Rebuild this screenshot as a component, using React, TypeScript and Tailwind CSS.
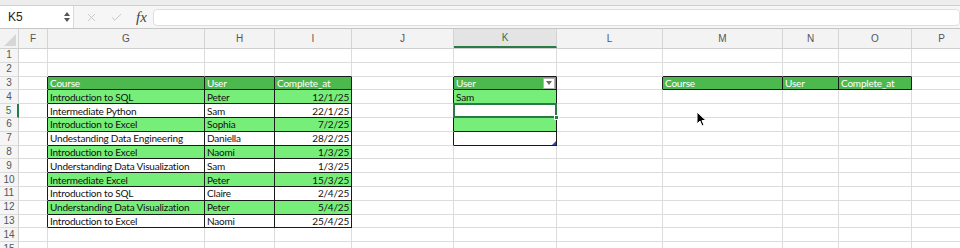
import { Check, X } from 'lucide-react';

const COLS = [
  { key: 'F', w: 'w-[29px]' },
  { key: 'G', w: 'w-[157px]' },
  { key: 'H', w: 'w-[70px]' },
  { key: 'I', w: 'w-[77px]' },
  { key: 'J', w: 'w-[102px]' },
  { key: 'K', w: 'w-[103px]' },
  { key: 'L', w: 'w-[106px]' },
  { key: 'M', w: 'w-[120px]' },
  { key: 'N', w: 'w-[56px]' },
  { key: 'O', w: 'w-[73px]' },
  { key: 'P', w: 'w-[60px]' },
];

const DATA: [string, string, string][] = [
  ['Introduction to SQL', 'Peter', '12/1/25'],
  ['Intermediate Python', 'Sam', '22/1/25'],
  ['Introduction to Excel', 'Sophia', '7/2/25'],
  ['Undestanding Data Engineering', 'Daniella', '28/2/25'],
  ['Introduction to Excel', 'Naomi', '1/3/25'],
  ['Understanding Data Visualization', 'Sam', '1/3/25'],
  ['Intermediate Excel', 'Peter', '15/3/25'],
  ['Introduction to SQL', 'Claire', '2/4/25'],
  ['Understanding Data Visualization', 'Peter', '5/4/25'],
  ['Introduction to Excel', 'Naomi', '25/4/25'],
];

const ROWS = Array.from({ length: 15 }, (_, i) => i + 1);

function bordered(ci: number, r: number): boolean {
  const k = COLS[ci]?.key;
  if (!k) return false;
  if (['G', 'H', 'I'].includes(k) && r >= 3 && r <= 13) return true;
  if (k === 'K' && r >= 3 && r <= 7) return true;
  if (['M', 'N', 'O'].includes(k) && r === 3) return true;
  return false;
}

function fill(k: string, r: number): string {
  if (r === 3 && ['G', 'H', 'I', 'K', 'M', 'N', 'O'].includes(k)) return 'bg-[#4cb94f] text-white';
  if (['G', 'H', 'I'].includes(k) && r >= 4 && r <= 13 && r % 2 === 0) return 'bg-[#77ee79]';
  if (k === 'K' && (r === 4 || r === 6)) return 'bg-[#77ee79]';
  return 'bg-white';
}

function text(k: string, r: number): string {
  if (r === 3) {
    if (k === 'G' || k === 'M') return 'Course';
    if (k === 'H' || k === 'K' || k === 'N') return 'User';
    if (k === 'I' || k === 'O') return 'Complete_at';
  }
  if (r >= 4 && r <= 13) {
    const row = DATA[r - 4];
    if (k === 'G') return row[0];
    if (k === 'H') return row[1];
    if (k === 'I') return row[2];
  }
  if (k === 'K' && r === 4) return 'Sam';
  return '';
}

function Cell({ ci, r }: { ci: number; r: number }) {
  const col = COLS[ci];
  const k = col.key;
  const right = bordered(ci, r) || bordered(ci + 1, r) ? 'border-r-[#1a1a1a]' : 'border-r-[#dcdcdc]';
  const bottom = bordered(ci, r) || bordered(ci, r + 1) ? 'border-b-[#1a1a1a]' : 'border-b-[#dcdcdc]';
  const align = k === 'I' && r > 3 ? 'justify-end pr-[2px]' : 'pl-[2px]';
  return (
    <div
      className={`relative flex h-[13.8px] shrink-0 items-center border-r border-b ${col.w} ${right} ${bottom} ${fill(k, r)} ${align} overflow-visible whitespace-nowrap text-[10px] tracking-[-0.2px] leading-none`}
    >
      {text(k, r)}
      {k === 'K' && r === 3 && (
        <div className="absolute right-[1px] top-[1px] flex h-[11px] w-[12px] items-center justify-center border border-[#b5b5b5] bg-white">
          <div className="h-0 w-0 border-x-[3.5px] border-t-[4px] border-x-transparent border-t-[#6a6a6a]" />
        </div>
      )}
      {k === 'K' && r === 5 && (
        <div className="absolute -left-px -top-px z-10 h-[15px] w-[104px] border-2 border-[#2a7a47]">
          <div className="absolute -bottom-[4px] -right-[4px] h-[5px] w-[5px] border border-white bg-[#2a7a47]" />
        </div>
      )}
      {k === 'K' && r === 7 && (
        <div className="absolute bottom-0 right-0 h-0 w-0 border-l-[4px] border-b-[4px] border-l-transparent border-b-[#2c4bb8]" />
      )}
    </div>
  );
}

export default function App() {
  return (
    <div className="relative h-[248px] w-[960px] overflow-hidden bg-white font-['Lato',sans-serif] text-[#111]">
      {/* toolbar strip */}
      <div className="h-[6px] border-b border-[#d0d0d0] bg-[#ededed]" />
      <div className="flex h-[23px] border-b border-[#c6c6c6] bg-[#f6f6f6]">
        <div className="flex w-[74px] shrink-0 items-center justify-between border-r border-[#dadada] bg-white pl-[8px] pr-[3px]">
          <span className="font-['Liberation_Sans',sans-serif] text-[12px] text-[#222]">K5</span>
          <div className="flex flex-col gap-[2px]">
            <div className="h-0 w-0 border-x-[3px] border-b-[4px] border-x-transparent border-b-[#555]" />
            <div className="h-0 w-0 border-x-[3px] border-t-[4px] border-x-transparent border-t-[#555]" />
          </div>
        </div>
        <div className="flex items-center">
          <X size={13} strokeWidth={1.6} className="ml-[11px] text-[#c2c2c2]" />
          <Check size={13} strokeWidth={1.6} className="ml-[12px] text-[#c2c2c2]" />
          <span className="ml-[13px] font-['Liberation_Serif',serif] text-[15px] italic leading-none text-[#444]">fx</span>
        </div>
        <div className="ml-[6px] mt-[3px] h-[17px] flex-1 rounded-sm border border-[#dedede] bg-white" />
      </div>

      {/* column header */}
      <div className="flex h-[20px] border-b border-[#cfcfcf] bg-[#f3f3f3] font-['Liberation_Sans',sans-serif] text-[10px] text-[#555]">
        <div className="relative w-[19px] shrink-0 border-r border-[#d4d4d4]">
          <div className="absolute bottom-[2px] right-[2px] h-0 w-0 border-l-[12px] border-b-[12px] border-l-transparent border-b-[#d6d6d6]" />
        </div>
        {COLS.map((c) => (
          <div
            key={c.key}
            className={`flex shrink-0 items-center justify-center border-r border-[#d4d4d4] ${c.w} ${
              c.key === 'K' ? 'border-b-2 border-b-[#2a7a47] bg-[#e4e4e4] text-[#2a7a47]' : ''
            }`}
          >
            {c.key}
          </div>
        ))}
      </div>

      {/* rows */}
      {ROWS.map((r) => (
        <div key={r} className="flex">
          <div
            className={`flex h-[13.8px] w-[19px] shrink-0 items-center justify-center border-b border-[#dcdcdc] bg-[#f5f5f5] font-['Liberation_Sans',sans-serif] text-[10px] leading-none ${
              r === 5 ? 'border-r-2 border-r-[#2a7a47] text-[#2a7a47]' : 'border-r border-r-[#cfcfcf] text-[#555]'
            }`}
          >
            {r}
          </div>
          {COLS.map((c, ci) => (
            <Cell key={c.key} ci={ci} r={r} />
          ))}
        </div>
      ))}

      {/* mouse pointer */}
      <svg className="absolute left-[696px] top-[111px]" width="11" height="16" viewBox="0 0 11 16">
        <path d="M1 1 L1 13 L4 10 L6 15 L8 14 L6 9.5 L10 9.5 Z" fill="#000" stroke="#fff" strokeWidth="1" />
      </svg>
    </div>
  );
}
